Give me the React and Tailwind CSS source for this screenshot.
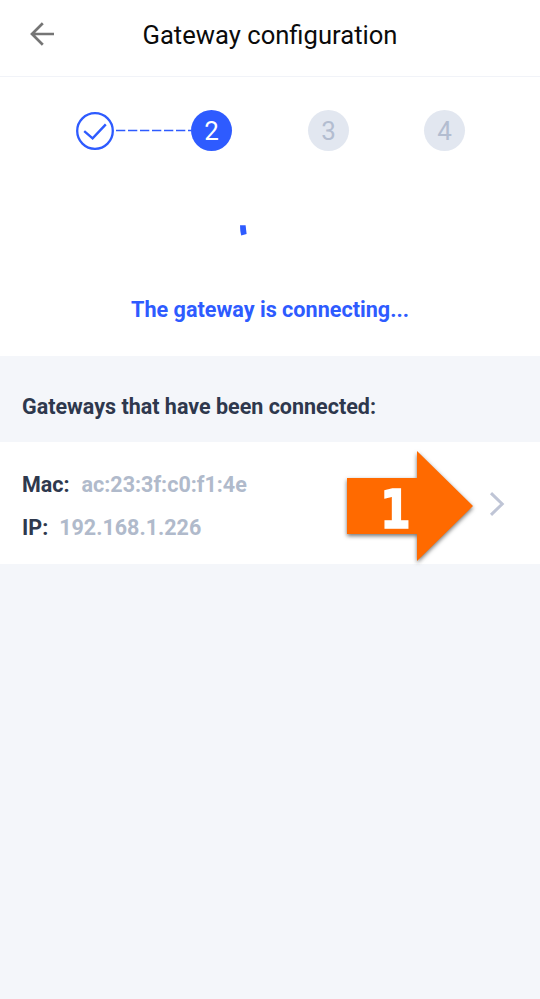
function Header() {
  return (
    <header className="relative flex h-[77px] items-start justify-center border-b border-[#f1f3f8] pt-[17px]">
      <button aria-label="Back" className="absolute left-[30px] top-[22px]">
        <svg width="24" height="24" viewBox="0 0 24 24" fill="none" stroke="#757575" strokeWidth="2.7">
          <path d="M24 12H2.3M12.8 1.2L2 12L12.8 22.8" />
        </svg>
      </button>
      <h1 className="text-[25.6px] leading-9 whitespace-nowrap text-[#0b0b0b]">Gateway configuration</h1>
    </header>
  );
}

function Step({ n, active }) {
  return (
    <div
      className={`flex size-[41px] items-center justify-center rounded-full pt-[2px] text-[26px] leading-[39px] ${
        active ? "bg-[#2e5bff] text-white" : "bg-[#e2e7f0] text-[#b3bdd0]"
      }`}
    >
      {n}
    </div>
  );
}

function Stepper() {
  return (
    <div className="flex h-[41px] items-center pl-[76px]">
      <svg width="38" height="38" viewBox="0 0 38 38" fill="none" stroke="#2e5bff">
        <circle cx="19" cy="19" r="17.8" strokeWidth="2.3" />
        <path d="M8.2 19.2L16.6 26.4L29.8 12.4" strokeWidth="2.4" />
      </svg>
      <svg width="77" height="3" viewBox="0 0 77 3" fill="none">
        <path d="M2 1.5H77" stroke="#2e5bff" strokeWidth="1.6" strokeDasharray="9.3 2.7" />
      </svg>
      <Step n="2" active />
      <div className="w-[76px]" />
      <Step n="3" />
      <div className="w-[75px]" />
      <Step n="4" />
    </div>
  );
}

function Field({ label, value, className }) {
  return (
    <div className={`flex text-[21.5px] leading-[43px] font-bold whitespace-nowrap ${className}`}>
      <span className="text-[#2e384d]">{label}</span>
      <span className="text-[#b0bacb]">{value}</span>
    </div>
  );
}

function PointerArrow() {
  return (
    <svg className="absolute left-[340px] top-1 overflow-visible" width="140" height="120" viewBox="340 446 140 120">
      <path
        className="drop-shadow-[0_2px_2px_rgba(0,0,0,0.55)]"
        d="M347 478H417V451L473 506L417 561V534H347Z"
        fill="#ff6a00"
      />
      <text
        transform="translate(395.4 528.3) scale(.82 1)"
        textAnchor="middle"
        fill="white"
        stroke="white"
        strokeWidth="1.6"
        fontSize="54"
        fontWeight="700"
        fontFamily="'DejaVu Sans'"
      >
        1
      </text>
    </svg>
  );
}

export default function App() {
  return (
    <div className="flex h-[999px] w-[540px] flex-col overflow-hidden bg-[#f4f6fa] font-[Roboto,sans-serif]">
      <div className="h-[356px] bg-white">
        <Header />
        <div className="pt-[33px]">
          <Stepper />
        </div>
        <div className="flex h-[142px] justify-center pt-[74px] pr-[54px]">
          <svg width="8" height="11" viewBox="0 0 8 11">
            <path d="M1 .3H6.6L7.6 9L2.2 10.4Q1 6 1 .3Z" fill="#2e5bff" />
          </svg>
        </div>
        <p className="text-center text-[21.6px] leading-[33px] font-bold whitespace-nowrap text-[#2e5bff]">The gateway is connecting...</p>
      </div>
      <h2 className="h-[86px] pt-[35px] pl-[22px] text-[21.5px] leading-8 font-bold whitespace-nowrap text-[#2e384d]">
        Gateways that have been connected:
      </h2>
      <div className="relative flex h-[122px] items-start bg-white">
        <div className="pt-[21px] pl-[22px]">
          <Field label="Mac:" value="ac:23:3f:c0:f1:4e" className="gap-3" />
          <Field label="IP:" value="192.168.1.226" className="gap-[11px]" />
        </div>
        <PointerArrow />
        <svg className="mt-[50px] mr-[35px] ml-auto" width="16" height="24" viewBox="0 0 16 24" fill="none" stroke="#bfc5d6" strokeWidth="3">
          <path d="M2 1.2L13.2 12L2 22.8" />
        </svg>
      </div>
    </div>
  );
}
